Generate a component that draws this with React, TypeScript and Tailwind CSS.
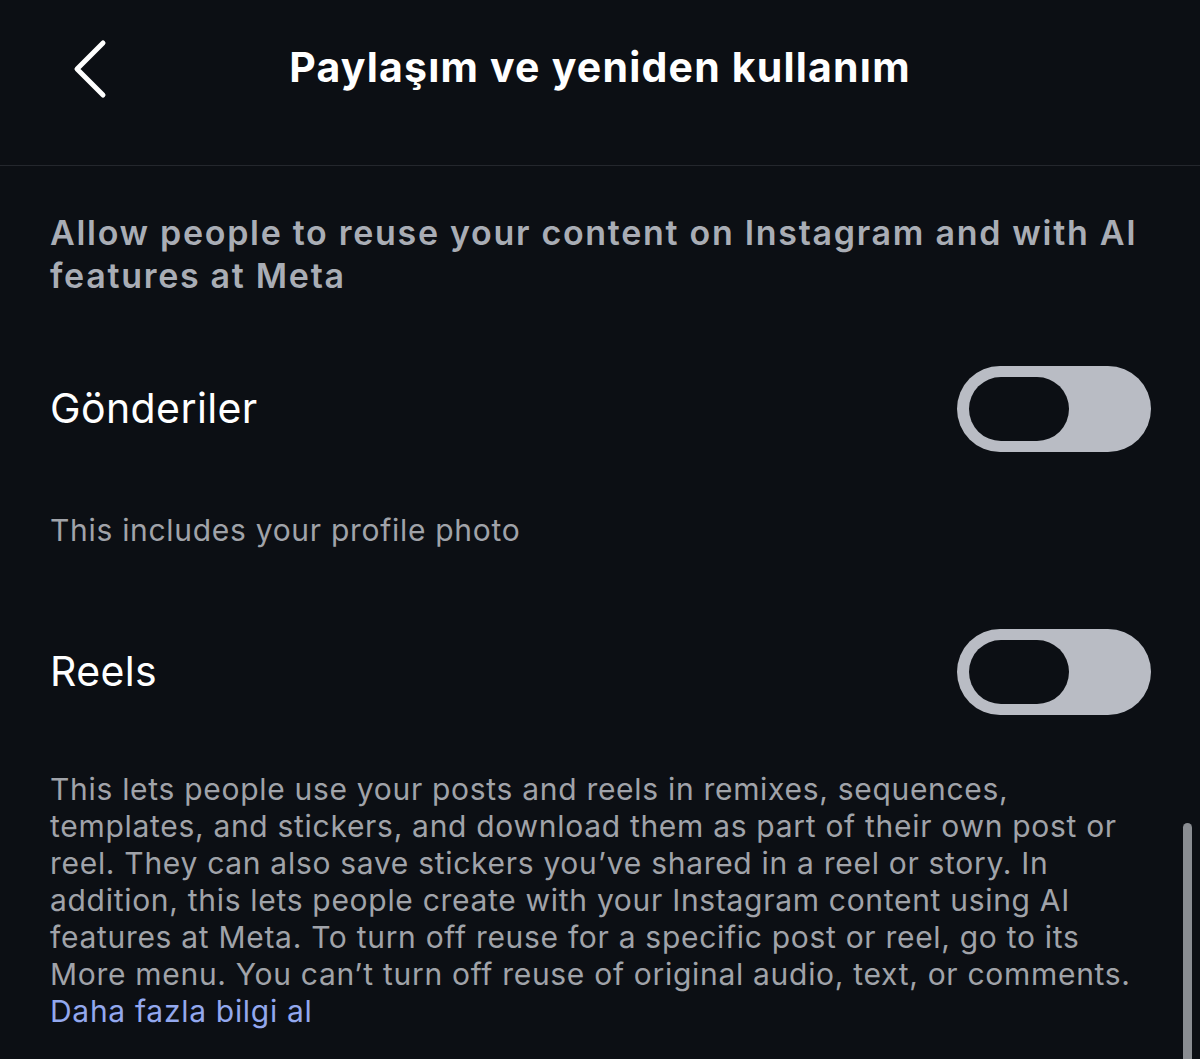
import { useState } from "react";

type ToggleProps = {
  on: boolean;
  onChange: (v: boolean) => void;
};

function Toggle({ on, onChange }: ToggleProps) {
  return (
    <button
      onClick={() => onChange(!on)}
      className="w-[194px] h-[86px] rounded-full bg-[#b9bcc4] flex items-center px-[12px] shrink-0"
      aria-pressed={on}
    >
      <span
        className={`w-[100px] h-[64px] rounded-full bg-[#0c0f14] ${on ? "ml-auto" : ""}`}
      />
    </button>
  );
}

const reuseLines = [
  "This lets people use your posts and reels in remixes, sequences,",
  "templates, and stickers, and download them as part of their own post or",
  "reel. They can also save stickers you’ve shared in a reel or story. In",
  "addition, this lets people create with your Instagram content using AI",
  "features at Meta. To turn off reuse for a specific post or reel, go to its",
  "More menu. You can’t turn off reuse of original audio, text, or comments.",
];

export default function App() {
  const [posts, setPosts] = useState(false);
  const [reels, setReels] = useState(false);

  return (
    <div
      className="relative w-[1200px] h-[1059px] overflow-hidden bg-[#0c0f14] text-white"
      style={{ fontFamily: "Inter, 'Noto Sans', sans-serif" }}
    >
      {/* Header */}
      <div className="h-[166px] flex items-center relative border-b border-[#24272d]">
        <button className="absolute left-[66px] top-[38px] w-[46px] h-[62px] flex items-center justify-center" aria-label="Geri">
          <svg width="40" height="62" viewBox="0 0 40 62" fill="none">
            <path d="M34 5L8 31l26 26" stroke="white" strokeWidth="5" strokeLinecap="round" strokeLinejoin="round" />
          </svg>
        </button>
        <h1 className="w-full text-center text-[41px] font-bold tracking-[1.2px] -mt-[30px]">
          Paylaşım ve yeniden kullanım
        </h1>
      </div>

      {/* Content */}
      <div className="px-[50px] pt-[45px]">
        <p className="text-[34px] leading-[43px] font-semibold text-[#a9adb5] tracking-[1.7px] whitespace-nowrap">
          Allow people to reuse your content on Instagram and with AI
          <br />
          features at Meta
        </p>

        <div className="flex items-center justify-between mt-[69px] mr-[-1px]">
          <span className="text-[41px] tracking-[0.4px]">Gönderiler</span>
          <Toggle on={posts} onChange={setPosts} />
        </div>
        <p className="text-[30px] text-[#a0a3a9] mt-[56px] tracking-[0.7px]">This includes your profile photo</p>

        <div className="flex items-center justify-between mt-[76px] mr-[-1px]">
          <span className="text-[41px] tracking-[0.4px]">Reels</span>
          <Toggle on={reels} onChange={setReels} />
        </div>

        <p className="text-[30px] leading-[37px] text-[#a0a3a9] mt-[56px] tracking-[0.7px] whitespace-nowrap">
          {reuseLines.map((line) => (
            <span key={line} className="block">
              {line}
            </span>
          ))}
          <a className="text-[#93a8ee] block">Daha fazla bilgi al</a>
        </p>
      </div>

      {/* Scrollbar */}
      <div className="absolute left-[1183px] top-[823px] w-[9px] h-[260px] rounded-full bg-[#8a8d92]" />
    </div>
  );
}
